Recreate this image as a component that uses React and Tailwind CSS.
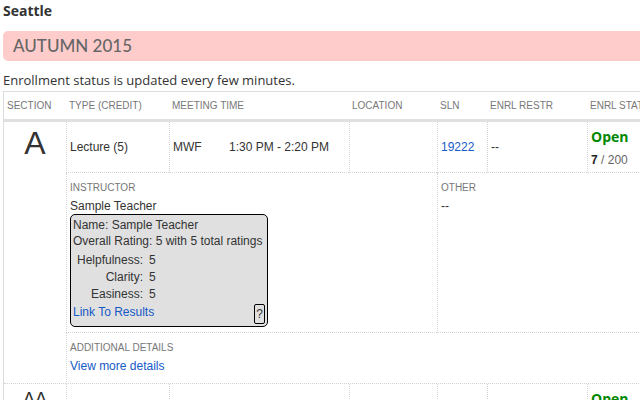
const cell = "border-l border-b border-dotted border-[#d4d4d4] px-[3px]";
const label = "text-[10px] leading-4 text-[#777] uppercase font-normal";
const link = "text-[#1459c7]";

const columns = ["Section", "Type (Credit)", "Meeting Time", "Location", "SLN", "Enrl Restr", "Enrl Status"];

const ratings = [
  ["Helpfulness:", 5],
  ["Clarity:", 5],
  ["Easiness:", 5],
];

function RatingCard() {
  return (
    <div className="w-[198px] rounded-[5px] border border-black bg-[#e0e0e0] p-0.5">
      <p>Name: Sample Teacher</p>
      <p>Overall Rating: 5 with 5 total ratings</p>
      <table className="mt-0.5">
        <tbody>
          {ratings.map(([name, value]) => (
            <tr key={name}>
              <th scope="row" className="h-[17px] pl-1 text-right font-normal">{name}</th>
              <td className="h-[17px] pl-1.5">{value}</td>
            </tr>
          ))}
        </tbody>
      </table>
      <div className="mt-0.5 flex items-start justify-between">
        <a href="#results" className={link}>Link To Results</a>
        <button type="button" className="h-5 rounded-[2px] border border-black px-px">?</button>
      </div>
    </div>
  );
}

function Enrollment({ taken, total }) {
  return (
    <>
      <strong className="block font-['Open_Sans',sans-serif] text-[14px] leading-5 text-[#080]">Open</strong>
      <span className="mt-[3px] block leading-5 text-[#666]"><b className="text-[#222]">{taken}</b> / {total}</span>
    </>
  );
}

export default function App() {
  return (
    <main className="h-screen overflow-hidden bg-white pl-[3px] font-['Liberation_Sans',Arial,sans-serif] text-[12px] leading-4 text-[#333]">
      <h1 className="pt-px font-['Open_Sans',sans-serif] text-[14px] leading-5 font-bold">Seattle</h1>
      <h2 className="mt-2.5 h-[30px] rounded-l-[5px] bg-[#fcc] pl-2.5 font-['Lato',sans-serif] text-[17px] leading-[30px] font-medium text-[#666]">
        AUTUMN 2015
      </h2>
      <p className="pt-2.5 pb-0.5 font-['Open_Sans',sans-serif] text-[13px] leading-[18px]">
        Enrollment status is updated every few minutes.
      </p>
      <table className="w-full min-w-[704px] table-fixed border-separate border-spacing-0 border-t border-l border-[#ddd]">
        <colgroup>
          <col className="w-[62px]" />
          <col className="w-[103px]" />
          <col className="w-[180px]" />
          <col className="w-[88px]" />
          <col className="w-[50px]" />
          <col className="w-[100px]" />
          <col />
        </colgroup>
        <thead>
          <tr>
            {columns.map((name) => (
              <th key={name} scope="col" className="h-[30px] border-b-3 border-[#e0e0e0] px-[3px] text-left text-[10px] leading-4 font-normal whitespace-nowrap text-[#777] uppercase">
                {name}
              </th>
            ))}
          </tr>
        </thead>
        <tbody>
          <tr>
            <th scope="rowgroup" rowSpan={3} className="border-b border-dotted border-[#d4d4d4] pt-[3px] text-center align-top text-[32px] leading-9 font-normal">A</th>
            <td className={`${cell} h-[51px]`}>Lecture (5)</td>
            <td className={cell}>
              <div className="flex">
                <span className="w-14">MWF</span>
                <span>1:30 PM - 2:20 PM</span>
              </div>
            </td>
            <td className={cell}></td>
            <td className={cell}><a href="#sln" className={link}>19222</a></td>
            <td className={cell}>--</td>
            <td className={`${cell} pt-[5px] align-top`}><Enrollment taken={7} total={200} /></td>
          </tr>
          <tr>
            <td colSpan={3} className={`${cell} h-40 pt-[7px] pb-[5px] align-top`}>
              <h3 className={label}>Instructor</h3>
              <p className="mt-0.5">Sample Teacher</p>
              <RatingCard />
            </td>
            <td colSpan={3} className={`${cell} pt-[7px] align-top`}>
              <h3 className={label}>Other</h3>
              <p className="mt-0.5">--</p>
            </td>
          </tr>
          <tr>
            <td colSpan={6} className={`${cell} h-[51px] pt-[7px] align-top`}>
              <h3 className={label}>Additional Details</h3>
              <a href="#details" className={`${link} mt-0.5 block w-fit`}>View more details</a>
            </td>
          </tr>
          <tr>
            <th scope="row" className="pt-[3px] text-center align-top text-[18px] leading-6 font-normal">AA</th>
            <td className={`${cell} h-[51px]`}></td>
            <td className={cell}></td>
            <td className={cell}></td>
            <td className={cell}></td>
            <td className={cell}></td>
            <td className={`${cell} pt-[5px] align-top`}><Enrollment taken={7} total={25} /></td>
          </tr>
        </tbody>
      </table>
    </main>
  );
}
